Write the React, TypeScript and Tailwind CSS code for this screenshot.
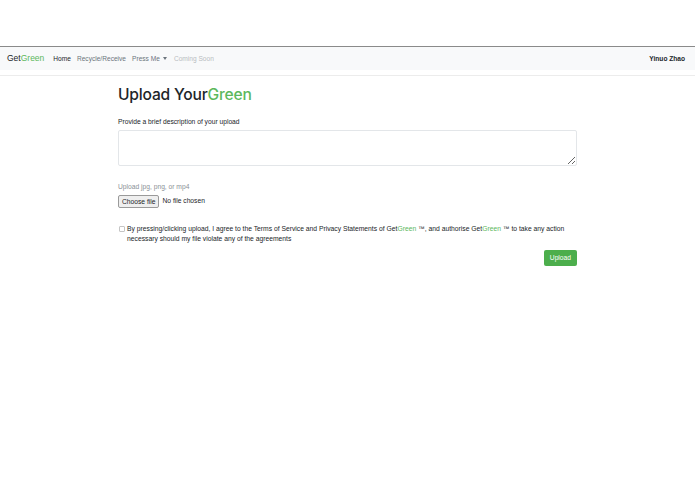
import React from "react";

export default function App() {
  return (
    <div className="min-h-[494px] bg-white text-[#212529]" style={{ fontFamily: '"Liberation Sans", Arial, sans-serif' }}>
      <div className="h-[46px]" />
      {/* Navbar */}
      <nav className="flex h-[24px] items-center justify-between border-t border-[#8a8a8a] bg-[#f8f9fa] px-[7px] text-[6.6px]">
        <div className="flex items-center">
          <span className="mr-[9px] text-[8.5px]">
            Get<span className="text-[#5cb85c]">Green</span>
          </span>
          <span className="mr-[6px] text-[#212529]">Home</span>
          <span className="mr-[6px] text-[#6c757d]">Recycle/Receive</span>
          <span className="mr-[7px] flex items-center text-[#6c757d]">
            Press Me
            <span className="ml-[3px] inline-block h-0 w-0 border-x-[2.5px] border-t-[3px] border-x-transparent border-t-[#6c757d]" />
          </span>
          <span className="text-[#b9bdc1]">Coming Soon</span>
        </div>
        <span className="mr-[3px] font-bold text-[#212529]">Yinuo Zhao</span>
      </nav>
      <div className="h-[6px] border-b border-[#ececec]" />

      {/* Content */}
      <main className="mx-auto w-[459px] pt-[8px]">
        <h1
          className="text-[15.6px] font-medium leading-[22px] tracking-[-0.2px]"
          style={{ fontFamily: 'Inter, "Liberation Sans", sans-serif' }}
        >
          Upload Your<span className="text-[#5cb85c]">Green</span>
        </h1>
        <p className="mt-[11px] text-[6.7px] leading-[9px]">Provide a brief description of your upload</p>
        <textarea className="mt-[4px] block h-[36px] w-full resize-y rounded-[2px] border border-[#e3e6e9] bg-white" />

        <p className="mt-[16px] text-[6.7px] leading-[9px] text-[#8a9096]">Upload jpg, png, or mp4</p>
        <div className="mt-[4px] flex items-center text-[6.7px]">
          <span className="rounded-[2px] border border-[#9a9a9a] bg-[#efefef] px-[3px] py-[1px] leading-[9px]">Choose file</span>
          <span className="ml-[3px]">No file chosen</span>
        </div>

        <div className="mt-[16px] flex items-start text-[6.75px] leading-[10px]">
          <span className="mt-[2px] ml-[1px] mr-[2px] h-[6px] w-[6px] shrink-0 rounded-[1px] border border-[#c5c5c5] bg-white" />
          <p className="w-[450px]">
            By pressing/clicking upload, I agree to the Terms of Service and Privacy Statements of Get
            <span className="text-[#5cb85c]">Green</span> ™, and authorise Get<span className="text-[#5cb85c]">Green</span> ™ to take any action necessary should my file violate any of the agreements
          </p>
        </div>

        <div className="mt-[6px] flex justify-end">
          <button className="h-[16px] rounded-[2px] bg-[#4cae4c] px-[6px] text-[6.7px] text-white">Upload</button>
        </div>
      </main>
    </div>
  );
}
